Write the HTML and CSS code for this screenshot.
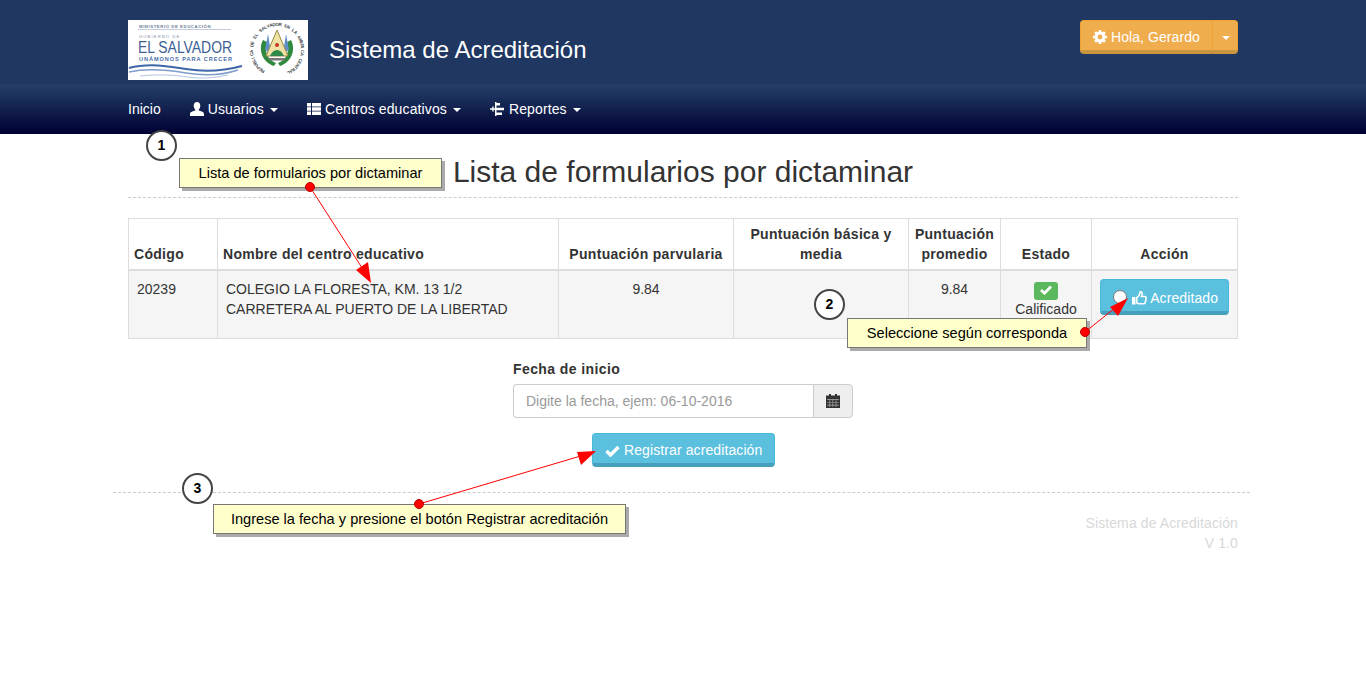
FILE: index.html

```html
<!DOCTYPE html>
<html lang="es">
<head>
  <meta charset="UTF-8">
  <title>Sistema de Acreditación</title>
  <link rel="stylesheet" href="styles.css">
</head>
<body>
<header class="top-header">
  <div class="wrap header-row">
    <div class="logo">
      <svg width="120" height="60" viewBox="0 0 120 60">
        <text x="11" y="7.500" font-size="4.300" fill="#6d7f9c" font-family="Liberation Sans" font-weight="bold" letter-spacing=".55">MINISTERIO DE EDUCACIÓN</text>
        <line x1="10" y1="9.500" x2="103" y2="9.500" stroke="#c3cbdc" stroke-width="1"/>
        <text x="11" y="17.500" font-size="4" fill="#7c8aa4" font-family="Liberation Sans" letter-spacing="1.200">GOBIERNO DE</text>
        <text x="10" y="33" font-size="15.600" fill="#3d5f95" font-family="Liberation Sans" textLength="94" lengthAdjust="spacingAndGlyphs">EL SALVADOR</text>
        <text x="11" y="41" font-size="5.600" fill="#4a6ea8" font-family="Liberation Sans" font-weight="bold" textLength="93" lengthAdjust="spacing">UNÁMONOS PARA CRECER</text>
        <path d="M1 48C20 43 40 46 58 49S92 52 114 46" fill="none" stroke="#3f66a8" stroke-width="2"/>
        <path d="M1 52C20 48 40 50 58 53S92 56 110 50" fill="none" stroke="#7f9ccb" stroke-width="1.500"/>
        <path d="M12 56C30 54 46 55 60 57S86 58 100 55" fill="none" stroke="#b3c5e0" stroke-width="1"/>
      </svg>
      <svg width="60" height="60" viewBox="120 0 60 60">
        <text font-size="4.400" font-weight="bold" fill="#3a3f48" font-family="Liberation Sans"
          x="137 134.7 132.5 130.6 128.9 127.5 126.4 125.6 125.2 125 125.2 125.6 126.4 127.5 128.9 130.6 132.5 134.7 137 139.5 142.1 144.8 147.6 150.4 153.2 155.9 158.5 161 163.3 165.5 167.4 169.1 170.5 171.6 172.4 172.8 173 172.8 172.4 171.6 170.5 169.1 167.4 165.5 163.3 161"
          y="50.8 49.2 47.5 45.4 43.2 40.8 38.2 35.5 32.8 30 27.2 24.5 21.8 19.2 16.8 14.6 12.5 10.8 9.2 8 7 6.4 6 6 6.4 7 8 9.2 10.8 12.5 14.6 16.8 19.2 21.8 24.5 27.2 30 32.8 35.5 38.2 40.8 43.2 45.4 47.5 49.2 50.8"
          rotate="-150 -143 -137 -130 -123 -117 -110 -103 -97 -90 -83 -77 -70 -63 -57 -50 -43 -37 -30 -23 -17 -10 -3 3 10 17 23 30 37 43 50 57 63 70 77 83 90 97 103 110 117 123 130 137 143 150">REPUBLICA DE EL SALVADOR EN LA AMERICA CENTRAL</text>
        <path d="M135 20C130 29 134 42 146 46L148 43C139 40 136 30 139 22Z" fill="#2f8a3f"/>
        <path d="M163 20C168 29 164 42 152 46L150 43C159 40 162 30 159 22Z" fill="#2f8a3f"/>
        <path d="M140 14L137 30L143 33ZM158 14L161 30L155 33Z" fill="#5f8fc8"/>
        <path d="M149 10L160 36H138Z" fill="#f1e3a6" stroke="#9a8a45" stroke-width="1"/>
        <path d="M142 36C145 28 153 28 156 36Z" fill="#2f8a4a"/>
        <circle cx="149" cy="25" r="2" fill="#c0392b"/>
        <rect x="141" y="38" width="16" height="2.500" fill="#777"/>
      </svg>
    </div>
    <div class="brand">Sistema de Acreditación</div>
    <div class="user-btn">
      <a class="btn-orange user-main">
        <svg class="ico" width="14" height="14" viewBox="0 0 14 14"><path fill="#fff" fill-rule="evenodd" d="M5.800 0h2.400l.3 1.900 1 .4L11 1.200l1.800 1.800-1.100 1.500.4 1 1.900.3v2.400l-1.900.3-.4 1 1.100 1.500-1.800 1.800-1.500-1.100-1 .4-.3 1.900H5.800l-.3-1.900-1-.4L3 12.800 1.200 11l1.100-1.500-.4-1L0 8.200V5.800l1.900-.3.4-1L1.200 3 3 1.200l1.500 1.100 1-.4zM7 4.600a2.400 2.400 0 1 0 0 4.800 2.400 2.400 0 0 0 0-4.800z"/></svg>
        Hola, Gerardo
      </a>
      <a class="btn-orange user-caret"><span class="caret"></span></a>
    </div>
  </div>
</header>

<nav class="main-nav">
  <ul class="wrap nav-list">
    <li class="nav-home"><a>Inicio</a></li>
    <li><a>
      <svg class="ico" width="14" height="14" viewBox="0 0 14 14"><path fill="#fff" d="M7 0c2 0 3.300 1.500 3.300 3.700 0 1.500-.6 2.900-1.500 3.700v1.100c1.800.6 5.200 1.300 5.200 3.500V14H0v-2c0-2.200 3.400-2.900 5.200-3.500V7.400C4.300 6.600 3.700 5.200 3.700 3.700 3.700 1.500 5 0 7 0z"/></svg>
      Usuarios <span class="caret"></span></a></li>
    <li><a>
      <svg class="ico" width="14" height="14" viewBox="0 0 14 14"><path fill="#fff" d="M0 1h4v3.500H0zM5 1h9v3.500H5zM0 5.300h4v3.400H0zM5 5.300h9v3.400H5zM0 9.500h4V13H0zM5 9.500h9V13H5z"/></svg>
      Centros educativos <span class="caret"></span></a></li>
    <li><a>
      <svg class="ico" width="15" height="14" viewBox="0 0 15 14"><path fill="#fff" d="M5 0h1.500v14H5zM0 6.300h5v1.400H0zM2.300 4.500h1.400v5H2.300zM6.500 1h3.500v2.400H6.500zM6.500 5.800H14v2.400H6.500zM6.500 10.600H12v2.400H6.500z"/></svg>
      Reportes <span class="caret"></span></a></li>
  </ul>
</nav>

<main class="wrap content">
  <div class="page-title"><h1>Lista de formularios por dictaminar</h1></div>

  <table class="forms-table">
    <colgroup>
      <col class="c-code"><col class="c-name"><col class="c-par"><col class="c-bas"><col class="c-avg"><col class="c-state"><col class="c-action">
    </colgroup>
    <thead>
      <tr>
        <th class="left">Código</th>
        <th class="left">Nombre del centro educativo</th>
        <th>Puntuación parvularia</th>
        <th>Puntuación básica y media</th>
        <th>Puntuación promedio</th>
        <th>Estado</th>
        <th>Acción</th>
      </tr>
    </thead>
    <tbody>
      <tr>
        <td class="left">20239</td>
        <td class="left name-cell">COLEGIO LA FLORESTA, KM. 13 1/2 CARRETERA AL PUERTO DE LA LIBERTAD</td>
        <td>9.84</td>
        <td></td>
        <td>9.84</td>
        <td class="state-cell">
          <span class="label-ok"><svg width="12" height="10" viewBox="0 0 12 10"><path fill="none" stroke="#fff" stroke-width="2.800" d="M1 5l3.500 3.200L11 1.500"/></svg></span>
          <div>Calificado</div>
        </td>
        <td class="action-cell">
          <a class="btn-info btn-acc">
            <svg class="ico" width="15" height="14" viewBox="0 0 15 14"><path fill="#fff" d="M0 6h3.500v7.500H0z"/><path fill="none" stroke="#fff" stroke-width="1.500" d="M4.800 6.500C6.500 5.500 8 3.500 8 1c0-.6 2.200-.6 2.200 1.500 0 1.200-.5 2.300-.8 3h3.300c1.800 0 1.800 2 1 2.800.6 1 .2 2-.5 2.400.2 1-.3 2-1.500 2H7.500c-1 0-2-.5-2.700-.7z"/></svg>
            Acreditado
          </a>
        </td>
      </tr>
    </tbody>
  </table>

  <form class="date-form">
    <label class="date-label">Fecha de inicio</label>
    <div class="input-group">
      <input class="date-input" type="text" placeholder="Digite la fecha, ejem: 06-10-2016">
      <span class="input-addon">
        <svg width="14" height="14" viewBox="0 0 14 14"><path fill="#333" d="M3 0h2v1.500h4V0h2v1.500h3V14H0V1.500h3z"/><path fill="#aaa" d="M1 5h12v.8H1zM1 8h12v.6H1zM1 10.800h12v.6H1zM3.500 5.500h.7V13h-.7zM6.500 5.500h.7V13h-.7zM9.700 5.500h.7V13h-.7z"/></svg>
      </span>
    </div>
    <a class="btn-info btn-register">
      <svg class="ico" width="15" height="12" viewBox="0 0 15 12"><path fill="none" stroke="#fff" stroke-width="3.400" d="M1.500 6l4 4L13.500 2"/></svg>
      Registrar acreditación
    </a>
  </form>
</main>

<footer class="wrap-footer">
  <div class="footer-text">Sistema de Acreditación<br>V 1.0</div>
</footer>

<!-- notas sobre la captura -->
<div class="notes">
  <div class="spot"></div>
  <div class="step step-1">1</div>
  <div class="step step-2">2</div>
  <div class="step step-3">3</div>
  <div class="callout call-1">Lista de formularios por dictaminar</div>
  <div class="callout call-2">Seleccione según corresponda</div>
  <div class="callout call-3">Ingrese la fecha y presione el botón Registrar acreditación</div>
  <svg class="arrows" width="1366" height="673" viewBox="0 0 1366 673">
    <line x1="310" y1="187" x2="366" y2="274" stroke="#f00"/>
    <path fill="#f00" d="M371 283L356 270L368 262Z"/>
    <line x1="1085" y1="332" x2="1115" y2="308" stroke="#f00"/>
    <path fill="#f00" d="M1128 298L1118 316L1110 307Z"/>
    <line x1="419" y1="504" x2="584" y2="455" stroke="#f00"/>
    <path fill="#f00" d="M596 451L581 465L577 452Z"/>
    <circle cx="310" cy="187" r="4.500" fill="#f00" stroke="#b00"/>
    <circle cx="1085" cy="332" r="4.500" fill="#f00" stroke="#b00"/>
    <circle cx="419" cy="504" r="4.500" fill="#f00" stroke="#b00"/>
  </svg>
</div>
</body>
</html>
```

FILE: styles.css

```css
* { box-sizing: border-box; }
body {
  margin: 0;
  font-family: "Liberation Sans", Arial, sans-serif;
  font-size: 14px;
  line-height: 20px;
  color: #333;
  background: #fff;
  position: relative;
}
.wrap { width: 1110px; margin: 0 auto; }
.ico { vertical-align: -2px; }
.caret {
  display: inline-block;
  width: 0;
  height: 0;
  margin-left: 2px;
  vertical-align: middle;
  border-top: 4px solid #fff;
  border-left: 4px solid transparent;
  border-right: 4px solid transparent;
}

/* cabecera */
.top-header { background: #1f3761; height: 84px; }
.header-row { display: flex; align-items: flex-start; padding-top: 20px; }
.logo { display: flex; flex: none; width: 180px; height: 60px; background: #fff; }
.logo svg { display: block; }
.brand { color: #fff; font-size: 24px; line-height: 60px; margin-left: 21px; flex: 1; }
.user-btn { display: flex; }
.btn-orange {
  display: block;
  height: 34px;
  background: #f0ad4e;
  color: #fff;
  border: 1px solid #eea236;
  border-bottom: 4px solid #c9963f;
  line-height: 32px;
  letter-spacing: .08px;
}
.user-main { width: 133px; padding-left: 12px; border-radius: 4px 0 0 4px; white-space: nowrap; }
.user-caret { width: 25px; padding-left: 7px; border-left: 0; border-radius: 0 4px 4px 0; }

/* menu */
.main-nav { height: 50px; background: linear-gradient(#24406a 0%, #1f3761 15%, #000033 100%); }
.nav-list { list-style: none; padding: 0; display: flex; margin: 0 auto; letter-spacing: .12px; }
.nav-list li a { display: block; color: #fff; line-height: 50px; margin-right: 29px; }
.nav-home { letter-spacing: 0; }

/* contenido */
.page-title {
  height: 64px;
  border-bottom: 1px dashed #ccc;
  text-align: center;
  margin-bottom: 20px;
}
.page-title h1 { margin: 0; padding-top: 20px; font-size: 30px; line-height: 36px; font-weight: 400; }

.forms-table { width: 1109px; table-layout: fixed; border-collapse: collapse; }
.c-code { width: 89px; }
.c-name { width: 341px; }
.c-par { width: 175px; }
.c-bas { width: 175px; }
.c-avg { width: 92px; }
.c-state { width: 91px; }
.c-action { width: 146px; }
.forms-table th, .forms-table td { border: 1px solid #ddd; text-align: center; }
.forms-table th {
  padding: 5px;
  vertical-align: bottom;
  border-bottom: 2px solid #ddd;
  font-weight: 700;
  letter-spacing: .3px;
}
.forms-table td { background: #f5f5f5; padding: 8px; height: 68px; vertical-align: top; }
.forms-table th.left { text-align: left; }
.forms-table td.left { text-align: left; }
.forms-table td.name-cell { padding-right: 30px; }
.label-ok {
  display: block;
  width: 24px;
  height: 18px;
  margin: 3px auto -1px;
  background: #5cb85c;
  border-radius: 3px;
  line-height: 16px;
}
.btn-info {
  display: block;
  background: #5bc0de;
  color: #fff;
  border: 1px solid #46b8da;
  border-bottom: 4px solid #46a0bc;
  border-radius: 4px;
}
.btn-acc { height: 36px; line-height: 33px; padding: 2px 0 0 21px; white-space: nowrap; letter-spacing: .1px; }

/* fecha */
.date-form { width: 340px; margin: 20px auto 0; }
.date-label { display: block; font-weight: 700; margin-bottom: 5px; letter-spacing: .4px; }
.input-group { display: flex; height: 34px; }
.date-input {
  flex: 1;
  min-width: 0;
  padding: 6px 12px;
  font: inherit;
  color: #555;
  border: 1px solid #ccc;
  border-right: 0;
  border-radius: 4px 0 0 4px;
}
.date-input::placeholder { color: #999; opacity: 1; }
.input-addon {
  width: 40px;
  background: #eee;
  border: 1px solid #ccc;
  border-radius: 0 4px 4px 0;
  display: flex;
  align-items: center;
  justify-content: center;
}
.btn-register {
  width: 183px;
  height: 34px;
  margin: 15px 0 0 79px;
  line-height: 33px;
  padding-left: 12px;
  white-space: nowrap;
  letter-spacing: .1px;
}

/* pie */
.wrap-footer {
  width: 1137px;
  margin: 25px 0 0 113px;
  border-top: 1px dashed #ccc;
  padding: 20px 12px 0 0;
  text-align: right;
  color: #d8d8d8;
  letter-spacing: .1px;
}

/* notas */
.notes { position: absolute; left: 0; top: 0; width: 1366px; height: 673px; pointer-events: none; }
.arrows { position: absolute; left: 0; top: 0; }
.spot {
  position: absolute;
  left: 1113px;
  top: 290px;
  width: 14px;
  height: 14px;
  border-radius: 50%;
  background: #fff;
  border: 1px solid #777;
}
.step {
  position: absolute;
  width: 31px;
  height: 31px;
  border: 2px solid #444;
  border-radius: 50%;
  background: #fff;
  color: #000;
  font-size: 14px;
  font-weight: 700;
  line-height: 27px;
  text-align: center;
}
.step-1 { left: 146px; top: 130px; }
.step-2 { left: 814px; top: 289px; }
.step-3 { left: 182px; top: 473px; }
.callout {
  position: absolute;
  height: 30px;
  background: #ffffcc;
  border: 1px solid #777;
  box-shadow: 3px 3px 0 #aaa;
  color: #000;
  font-size: 14.600px;
  line-height: 28px;
  text-align: center;
  white-space: nowrap;
}
.call-1 { left: 179px; top: 158px; width: 263px; }
.call-2 { left: 847px; top: 318px; width: 240px; }
.call-3 { left: 213px; top: 504px; width: 413px; }
```
